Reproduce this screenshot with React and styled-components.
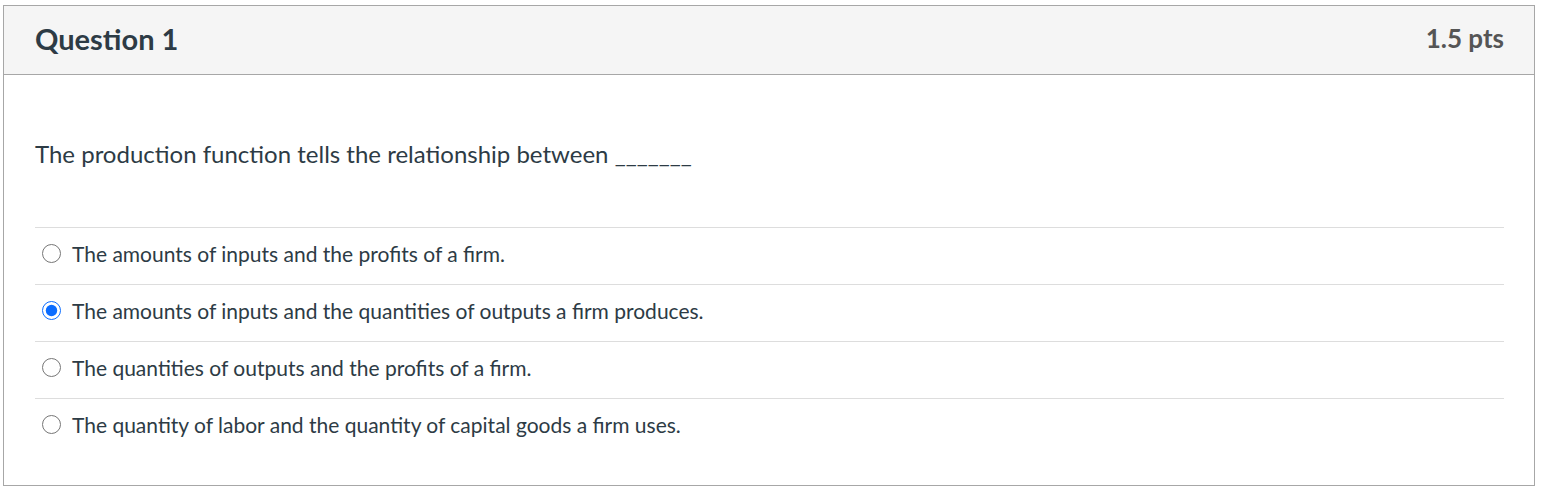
import React from 'react';
import styled, { createGlobalStyle } from 'styled-components';

const GlobalStyle = createGlobalStyle`
  body {
    margin: 0;
    background: #fff;
    font-family: Lato, "Liberation Sans", sans-serif;
  }
`;

const Page = styled.div`
  padding: 5px 0 0 3px;
`;

const Card = styled.section`
  box-sizing: border-box;
  width: 1532px;
  height: 481px;
  border: 1px solid #a7a7a7;
  background: #fff;
`;

const Header = styled.header`
  display: flex;
  justify-content: space-between;
  align-items: center;
  box-sizing: border-box;
  height: 69px;
  padding: 0 30px 4px 31px;
  background: #f5f5f5;
  border-bottom: 1px solid #a7a7a7;
`;

const Title = styled.h2`
  margin: 0;
  font-size: 29px;
  font-weight: 700;
  color: #2d3b45;
`;

const Points = styled.span`
  font-size: 26px;
  font-weight: 700;
  color: #555;
`;

const Body = styled.div`
  padding: 0 30px 0 31px;
`;

const Prompt = styled.p`
  margin: 0;
  padding: 65px 0 59px;
  font-size: 24px;
  line-height: 28px;
  color: #2d3b45;
`;

const Answers = styled.div`
  display: flex;
  flex-direction: column;
`;

const Answer = styled.label`
  display: flex;
  align-items: center;
  gap: 11px;
  box-sizing: border-box;
  height: 57px;
  padding: 0 0 5px 7px;
  border-top: 1px solid #ddd;
  font-size: 21px;
  color: #2d3b45;
`;

const Radio = styled.input`
  width: 19px;
  height: 19px;
  margin: 0;
  accent-color: #0b6cff;
`;

const answers = [
  'The amounts of inputs and the profits of a firm.',
  'The amounts of inputs and the quantities of outputs a firm produces.',
  'The quantities of outputs and the profits of a firm.',
  'The quantity of labor and the quantity of capital goods a firm uses.',
];

export default function App() {
  return (
    <Page>
      <GlobalStyle />
      <Card>
        <Header>
          <Title>Question 1</Title>
          <Points>1.5 pts</Points>
        </Header>
        <Body>
          <Prompt>The production function tells the relationship between _______</Prompt>
          <Answers>
            {answers.map((text, i) => (
              <Answer key={text}>
                <Radio type="radio" name="q1" defaultChecked={i === 1} />
                {text}
              </Answer>
            ))}
          </Answers>
        </Body>
      </Card>
    </Page>
  );
}
